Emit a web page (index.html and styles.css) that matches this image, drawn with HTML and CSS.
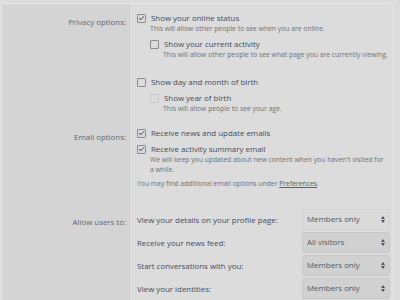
FILE: index.html
```html
<!DOCTYPE html>
<html lang="en">
<head>
    <meta charset="UTF-8">
    <title>Privacy settings</title>
    <link rel="stylesheet" href="styles.css">
</head>
<body>
    <div class="block">
        <div class="form-row">
            <div class="row-label">Privacy options:</div>
            <div class="row-input">
                <ul class="choices">
                    <li>
                        <label class="choice"><span class="box checked"></span>Show your online status</label>
                        <div class="hint">This will allow other people to see when you are online.</div>
                        <ul class="choices nested">
                            <li>
                                <label class="choice"><span class="box"></span>Show your current activity</label>
                                <div class="hint">This will allow other people to see what page you are currently viewing.</div>
                            </li>
                        </ul>
                    </li>
                    <li class="spaced">
                        <label class="choice"><span class="box"></span>Show day and month of birth</label>
                        <ul class="choices nested">
                            <li>
                                <label class="choice"><span class="box disabled"></span>Show year of birth</label>
                                <div class="hint">This will allow people to see your age.</div>
                            </li>
                        </ul>
                    </li>
                </ul>
            </div>
        </div>

        <div class="form-row">
            <div class="row-label">Email options:</div>
            <div class="row-input">
                <ul class="choices">
                    <li>
                        <label class="choice"><span class="box checked"></span>Receive news and update emails</label>
                    </li>
                    <li>
                        <label class="choice"><span class="box checked"></span>Receive activity summary email</label>
                        <div class="hint hint-email">We will keep you updated about new content when you haven't visited for a while.</div>
                    </li>
                </ul>
                <div class="explain">You may find additional email options under <a href="#">Preferences</a>.</div>
            </div>
        </div>

        <div class="form-row privacy">
            <div class="row-label">Allow users to:</div>
            <div class="row-input">
                <div class="privacy-row">
                    <span>View your details on your profile page:</span>
                    <span class="select light">Members only</span>
                </div>
                <div class="privacy-row">
                    <span>Receive your news feed:</span>
                    <span class="select">All visitors</span>
                </div>
                <div class="privacy-row">
                    <span>Start conversations with you:</span>
                    <span class="select">Members only</span>
                </div>
                <div class="privacy-row">
                    <span>View your identities:</span>
                    <span class="select">Members only</span>
                </div>
            </div>
        </div>
    </div>
</body>
</html>
```

FILE: styles.css
```css
body {
    margin: 0;
    background: #dcdcdc;
    font-family: "Open Sans", "Noto Sans", sans-serif;
    color: #3f4d5c;
}
.block {
    margin: 3px 6px 0 1px;
    border: 1px solid #e8e8e8;
    border-radius: 3px;
    overflow: hidden;
}
.form-row {
    display: flex;
}
.row-label {
    width: 124px;
    flex-shrink: 0;
    padding: 12px 5px 0 0;
    text-align: right;
    font-size: 7.9px;
    line-height: 12px;
    color: #5c6975;
    background: #d4d4d4;
    border-right: 1px solid #e2e2e2;
}
.row-input {
    flex: 1;
    padding: 8px 3px 5px 5px;
}
.privacy .row-label {
    padding-top: 22px;
}
.privacy .row-input {
    padding-top: 15px;
}
.choices {
    list-style: none;
    margin: 0;
    padding: 0;
}
.choices li + li {
    margin-top: 4px;
}
.choices li.spaced {
    margin-top: 16px;
}
.choices.nested {
    margin-top: 4px;
    padding-left: 13px;
}
.choice {
    display: flex;
    align-items: center;
    font-size: 7.9px;
    line-height: 12px;
}
.box {
    width: 7px;
    height: 7px;
    border: 1px solid #878d93;
    border-radius: 1px;
    margin-right: 5px;
    position: relative;
}
.box.checked::after {
    content: "";
    position: absolute;
    left: 2px;
    top: 0;
    width: 2px;
    height: 4px;
    border: solid #6b737b;
    border-width: 0 1px 1px 0;
    transform: rotate(45deg);
}
.box.disabled {
    border-color: #c4c6c8;
}
.hint {
    padding-left: 13px;
    font-size: 6.8px;
    line-height: 10px;
    color: #6f7276;
}
.hint-email {
    padding-right: 5px;
}
.explain {
    margin-top: 4px;
    font-size: 6.8px;
    line-height: 10px;
    color: #6f7276;
}
.explain a {
    color: #5a626b;
}
.privacy-row {
    display: flex;
    align-items: center;
    justify-content: space-between;
    font-size: 7.9px;
    height: 21px;
    margin-bottom: 2px;
}
.select {
    width: 78px;
    height: 19px;
    line-height: 19px;
    padding: 0 4px;
    border: 1px solid #c9c9c9;
    border-radius: 3px;
    background: #d1d1d1;
    color: #4d5966;
    position: relative;
}
.select.light {
    background: #dadada;
    border-color: #d2d2d2;
}
.select::after {
    content: "";
    position: absolute;
    right: 4px;
    top: 6px;
    width: 0;
    height: 0;
    border: 2px solid transparent;
    border-bottom: 3px solid #4a5560;
    border-top: 0;
}
.select::before {
    content: "";
    position: absolute;
    right: 4px;
    top: 10px;
    width: 0;
    height: 0;
    border: 2px solid transparent;
    border-top: 3px solid #4a5560;
    border-bottom: 0;
}
```
